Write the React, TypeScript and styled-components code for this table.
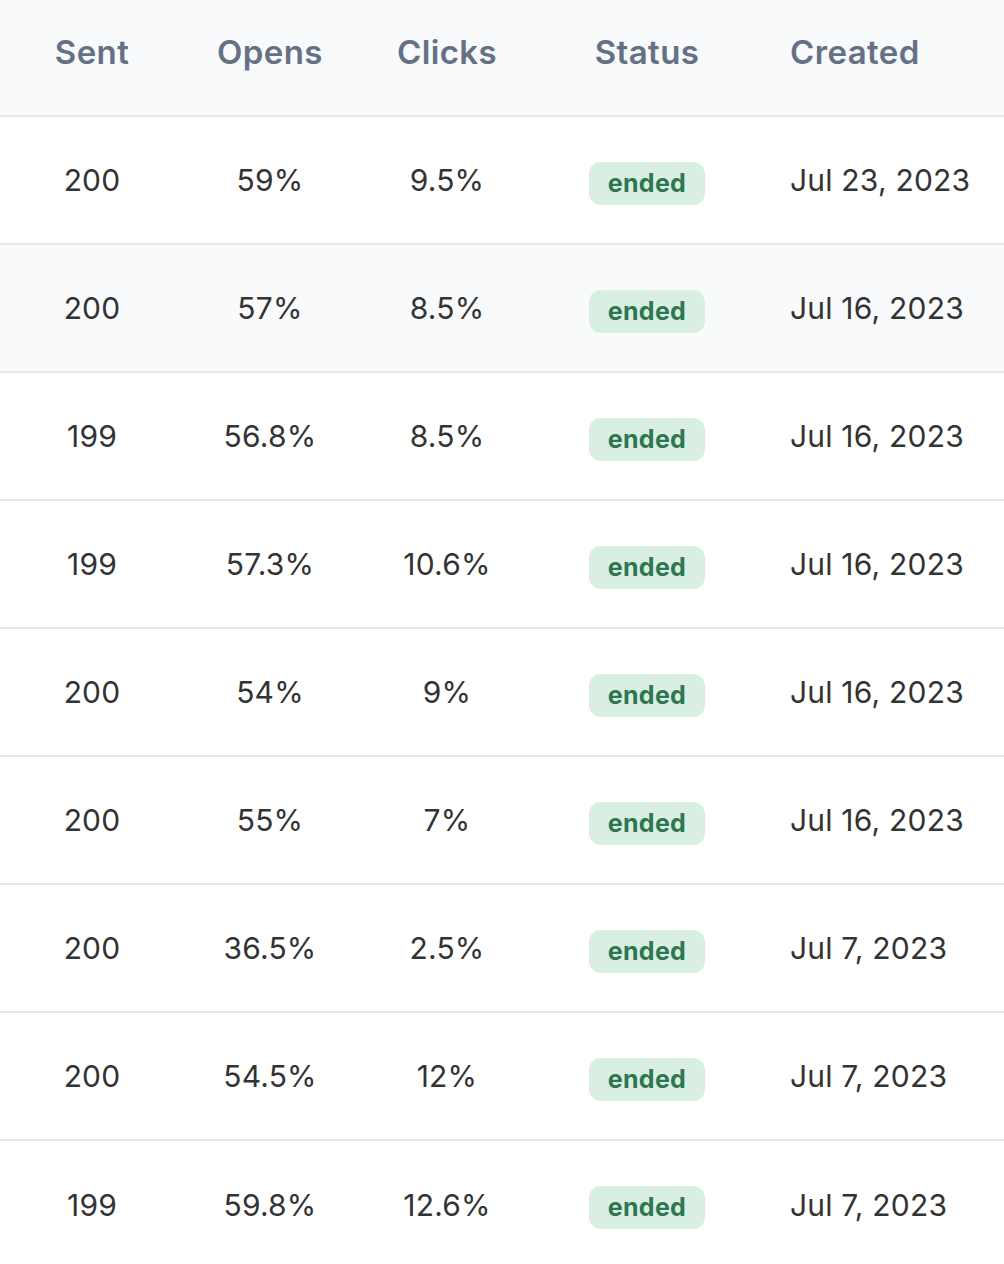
import React from "react";
import styled, { createGlobalStyle } from "styled-components";

const GlobalStyle = createGlobalStyle`
  html, body {
    margin: 0;
    padding: 0;
    background: #ffffff;
  }
  body {
    font-family: "Inter", "Open Sans", "Liberation Sans", sans-serif;
    -webkit-font-smoothing: antialiased;
  }
`;

const Wrapper = styled.div`
  width: 1004px;
  overflow: hidden;
`;

const Table = styled.table`
  width: 1040px;
  border-collapse: collapse;
  table-layout: fixed;
`;

const HeadRow = styled.tr`
  background: #f8fafc;
  height: 116px;
  border-bottom: 2px solid #e5e7eb;
`;

const Th = styled.th<{ $align?: "left" | "center" }>`
  font-size: 33px;
  font-weight: 600;
  color: #667085;
  text-align: ${(p) => p.$align ?? "center"};
  padding: 0 0 12px ${(p) => (p.$align === "left" ? "34px" : "0")};
  letter-spacing: 0.4px;
`;

const Row = styled.tr<{ $shaded?: boolean; $last?: boolean }>`
  height: 128px;
  background: ${(p) => (p.$shaded ? "#f8fafc" : "#ffffff")};
  border-bottom: ${(p) => (p.$last ? "none" : "2px solid #e5e7eb")};
`;

const Td = styled.td<{ $align?: "left" | "center"; $offset?: number }>`
  font-size: 30px;
  font-weight: 400;
  color: #333333;
  text-align: ${(p) => p.$align ?? "center"};
  padding: ${(p) => p.$offset ?? 0}px 0 0 ${(p) => (p.$align === "left" ? "34px" : "0")};
  white-space: nowrap;
  letter-spacing: 0.2px;
`;

const Badge = styled.span`
  display: inline-block;
  padding: 0 19px;
  height: 43px;
  line-height: 43px;
  border-radius: 12px;
  background: #d9efe3;
  color: #2e7650;
  font-size: 25px;
  font-weight: 700;
  letter-spacing: 0.3px;
  vertical-align: middle;
`;

type Campaign = {
  sent: number;
  opens: string;
  clicks: string;
  status: string;
  created: string;
};

const data: Campaign[] = [
  { sent: 200, opens: "59%", clicks: "9.5%", status: "ended", created: "Jul 23, 2023" },
  { sent: 200, opens: "57%", clicks: "8.5%", status: "ended", created: "Jul 16, 2023" },
  { sent: 199, opens: "56.8%", clicks: "8.5%", status: "ended", created: "Jul 16, 2023" },
  { sent: 199, opens: "57.3%", clicks: "10.6%", status: "ended", created: "Jul 16, 2023" },
  { sent: 200, opens: "54%", clicks: "9%", status: "ended", created: "Jul 16, 2023" },
  { sent: 200, opens: "55%", clicks: "7%", status: "ended", created: "Jul 16, 2023" },
  { sent: 200, opens: "36.5%", clicks: "2.5%", status: "ended", created: "Jul 7, 2023" },
  { sent: 200, opens: "54.5%", clicks: "12%", status: "ended", created: "Jul 7, 2023" },
  { sent: 199, opens: "59.8%", clicks: "12.6%", status: "ended", created: "Jul 7, 2023" },
];

export default function App() {
  return (
    <Wrapper>
      <GlobalStyle />
      <Table>
        <colgroup>
          <col style={{ width: 184 }} />
          <col style={{ width: 172 }} />
          <col style={{ width: 182 }} />
          <col style={{ width: 218 }} />
          <col />
        </colgroup>
        <thead>
          <HeadRow>
            <Th>Sent</Th>
            <Th>Opens</Th>
            <Th>Clicks</Th>
            <Th>Status</Th>
            <Th $align="left">Created</Th>
          </HeadRow>
        </thead>
        <tbody>
          {data.map((d, i) => (
            <Row key={i} $shaded={i === 1} $last={i === data.length - 1}>
              <Td>{d.sent}</Td>
              <Td>{d.opens}</Td>
              <Td>{d.clicks}</Td>
              <Td $offset={6}>
                <Badge>{d.status}</Badge>
              </Td>
              <Td $align="left">{d.created}</Td>
            </Row>
          ))}
        </tbody>
      </Table>
    </Wrapper>
  );
}
